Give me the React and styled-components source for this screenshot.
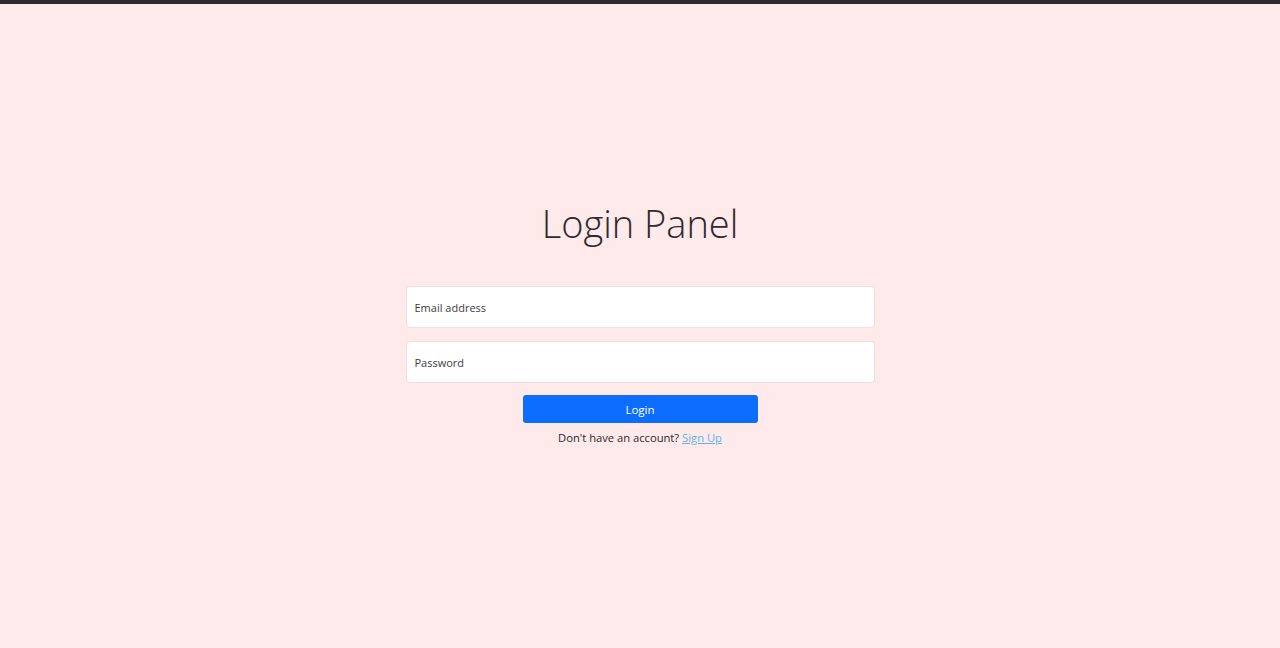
import React from "react";
import styled, { createGlobalStyle } from "styled-components";

const Global = createGlobalStyle`
  html, body { margin: 0; padding: 0; height: 100%; }
  body {
    background: #fee9eb;
    font-family: "Open Sans", "Noto Sans", sans-serif;
    color: #212529;
  }
`;

const Page = styled.div`
  min-height: 648px;
  display: flex;
  flex-direction: column;
  box-sizing: border-box;
  border-top: 4px solid #2c2a2a;
`;

const Main = styled.main`
  display: flex;
  flex-direction: column;
  align-items: center;
  padding-top: 196px;
`;

const Title = styled.h1`
  margin: 0;
  font-weight: 300;
  font-size: 38px;
  line-height: 46px;
  color: #2f2a2c;
  letter-spacing: 0;
`;

const Form = styled.form`
  width: 469px;
  margin-top: 40px;
  display: flex;
  flex-direction: column;
  align-items: center;
`;

const Input = styled.input`
  box-sizing: border-box;
  width: 100%;
  height: 42px;
  margin-bottom: ${(p) => p.$mb || 0}px;
  padding: 0 8px;
  border: 1px solid #f3dde0;
  border-radius: 4px;
  background: #fff;
  font-family: inherit;
  font-size: 11px;
  color: #212529;
  outline: none;
  &::placeholder { color: #3d3d3d; }
`;

const Button = styled.button`
  width: 235px;
  height: 28px;
  margin-top: 12px;
  border: none;
  border-radius: 3px;
  background: #0d6efd;
  color: #fff;
  font-family: inherit;
  font-size: 11.5px;
  cursor: pointer;
`;

const Note = styled.p`
  margin: 7px 0 0;
  font-size: 11.2px;
  line-height: 16px;
  color: #2a2a2a;
`;

const Link = styled.a`
  color: #5bb6e6;
  text-decoration: underline;
`;

export default function App() {
  return (
    <>
      <Global />
      <Page>
        <Main>
          <Title>Login Panel</Title>
          <Form onSubmit={(e) => e.preventDefault()}>
            <Input type="email" placeholder="Email address" $mb={13} />
            <Input type="password" placeholder="Password" />
            <Button type="submit">Login</Button>
            <Note>
              Don't have an account? <Link href="#">Sign Up</Link>
            </Note>
          </Form>
        </Main>
      </Page>
    </>
  );
}
